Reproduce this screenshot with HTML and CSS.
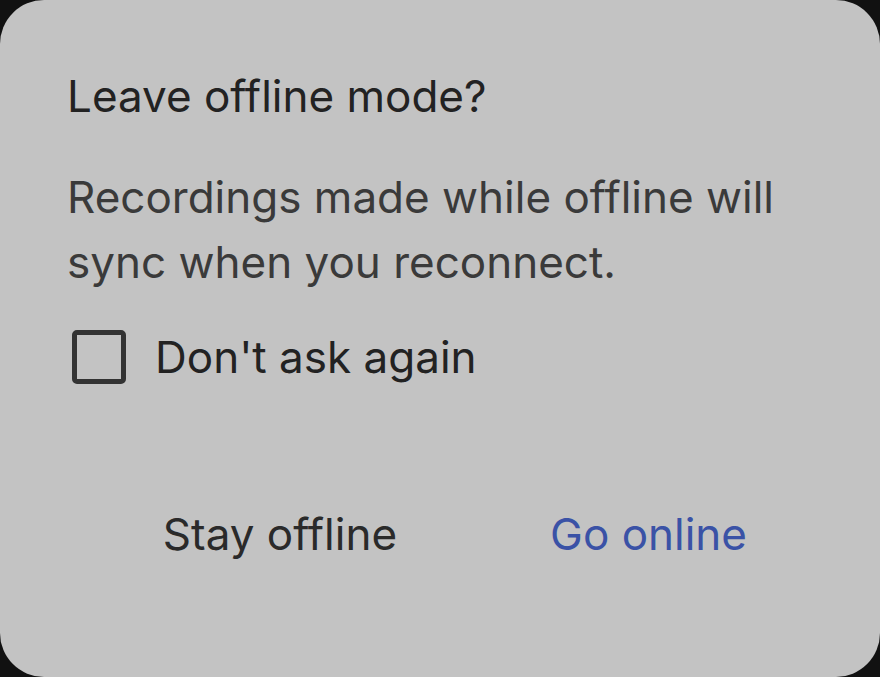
FILE: index.html
```html
<!DOCTYPE html>
<html>
<head>
<meta charset="utf-8">
<link rel="stylesheet" href="styles.css">
</head>
<body>
<div class="dialog">
  <h1 class="title">Leave offline mode?</h1>
  <p class="message">Recordings made while offline will sync when you reconnect.</p>
  <label class="check-row">
    <span class="checkbox"></span>
    <span class="check-label">Don't ask again</span>
  </label>
  <div class="actions">
    <button class="btn btn-neutral">Stay offline</button>
    <button class="btn btn-primary">Go online</button>
  </div>
</div>
</body>
</html>
```

FILE: styles.css
```css
html, body {
  margin: 0;
  padding: 0;
  background: #111111;
}
body {
  font-family: Inter, "Noto Sans", sans-serif;
}
.dialog {
  box-sizing: border-box;
  width: 880px;
  height: 677px;
  background: #c3c3c3;
  border-radius: 44px;
  padding: 70px 67px 0 67px;
  display: flex;
  flex-direction: column;
}
.title {
  margin: 0;
  font-size: 44px;
  font-weight: 400;
  line-height: 52px;
  color: #222222;
}
.message {
  margin: 43px 0 0 0;
  font-size: 44px;
  line-height: 65px;
  color: #3a3a3a;
}
.check-row {
  display: flex;
  align-items: center;
  gap: 29px;
  margin-top: 35px;
  padding-left: 5px;
}
.checkbox {
  box-sizing: border-box;
  flex: none;
  width: 54px;
  height: 54px;
  border: 5px solid #333333;
  border-radius: 5px;
}
.check-label {
  font-size: 44px;
  line-height: 54px;
  color: #222222;
}
.actions {
  display: flex;
  justify-content: flex-end;
  margin-top: 123px;
  gap: 153px;
  padding-right: 66px;
}
.btn {
  background: none;
  border: none;
  padding: 0;
  font-family: Inter, "Noto Sans", sans-serif;
  font-size: 44px;
  line-height: normal;
  cursor: pointer;
}
.btn-neutral {
  color: #2a2a2a;
}
.btn-primary {
  color: #3a52a6;
}
```
